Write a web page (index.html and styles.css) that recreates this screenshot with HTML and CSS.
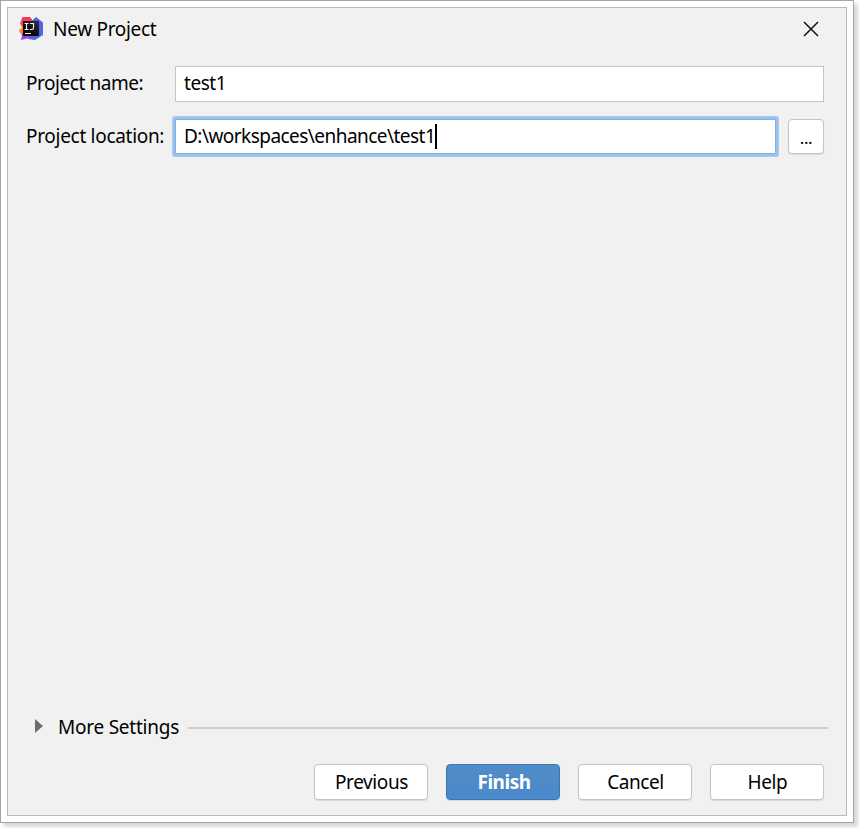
FILE: index.html
```html
<!DOCTYPE html>
<html lang="en">
<head>
<meta charset="utf-8">
<title>New Project</title>
<link rel="stylesheet" href="styles.css">
</head>
<body>
<div class="frame">
  <main class="dialog">
    <header class="titlebar">
      <svg class="logo" viewBox="0 0 24 24" aria-hidden="true">
        <defs>
          <linearGradient id="warm" x1="0" y1="0" x2="0" y2="1"><stop offset="0" stop-color="#fb2f60"/><stop offset=".55" stop-color="#f45a4a"/><stop offset="1" stop-color="#9b45e0"/></linearGradient>
          <linearGradient id="cool" x1="0" y1="0" x2="1" y2="1"><stop offset="0" stop-color="#286be8"/><stop offset=".55" stop-color="#625be5"/><stop offset="1" stop-color="#2d75e8"/></linearGradient>
          <linearGradient id="tile" x1="1" y1="0" x2="0" y2="1"><stop offset="0" stop-color="#34343a"/><stop offset=".6" stop-color="#08080b"/></linearGradient>
        </defs>
        <path d="M13 4l4-4 7 5.500V18l-8 5-7-1z" fill="url(#cool)"/>
        <path d="M3.500 0H11l4 5-6 13-7 0 2-5-3-7z" fill="url(#warm)"/>
        <path d="M0 13l4-3v7l-3-1z" fill="#ff8a1e"/>
        <path d="M2 23l1.500-7L14 19l-4 2z" fill="#9548df"/>
        <path d="M4 4h16v15H4z" fill="url(#tile)"/>
        <path d="M5.500 6.500h4M7.500 6.500V12M5.500 12.500h4M11 6.500h3.500v4.500q0 1.500-1.500 1.500H10.800M6 16.500h6" fill="none" stroke="#f4f4f4" stroke-width="1.200"/>
      </svg>
      <h1 class="title">New Project</h1>
      <svg class="close" viewBox="0 0 16 16" aria-hidden="true"><path d="M1 1l14 14M15 1L1 15" fill="none" stroke="#111" stroke-width="1.500"/></svg>
    </header>
    <section class="form">
      <label class="label name">Project name:</label>
      <div class="field"><span>test1</span></div>
      <label class="label location">Project location:</label>
      <div class="row">
        <div class="field focused"><span class="path">D:\workspaces\enhance\test1</span><i class="caret"></i></div>
        <div class="button browse"><span>...</span></div>
      </div>
    </section>
    <section class="more">
      <svg class="arrow" viewBox="0 0 8 14" aria-hidden="true"><path d="M0 0l8 7-8 7z" fill="#6e6e6e"/></svg>
      <span class="more-text">More Settings</span>
      <div class="rule"></div>
    </section>
    <footer class="actions">
      <div class="button">Previous</div>
      <div class="button primary">Finish</div>
      <div class="button">Cancel</div>
      <div class="button">Help</div>
    </footer>
  </main>
</div>
</body>
</html>
```
FILE: styles.css
```css
* { box-sizing: border-box; }
body { margin: 0; height: 828px; overflow: hidden; background: #fff; font: 19px/24px "Noto Sans", sans-serif; color: #000; white-space: nowrap; }
.frame { width: 854px; height: 823px; padding: 6px; border: 1px solid #a5a5a5; background: #fff; box-shadow: 4px 4px 4px rgba(0,0,0,.16); }
.dialog { width: 840px; height: 809px; border: 1px solid #bababa; background: #f1f1f1; display: flex; flex-direction: column; }
.titlebar { height: 42px; display: flex; align-items: center; padding: 0 27px 0 11px; }
.logo { width: 24px; height: 24px; }
.title { margin: 0 auto 0 10px; font-size: 19px; font-weight: 400; letter-spacing: -.3px; }
.close { width: 16px; height: 16px; }
.form { display: grid; grid-template-columns: 148px 650px; row-gap: 17px; padding: 16px 0 0 18px; }
.label { height: 36px; line-height: 35px; letter-spacing: -.45px; }
.location { letter-spacing: -.3px; }
.row { display: flex; gap: 12px; }
.field { height: 36px; flex: 1; display: flex; align-items: center; margin-left: 1px; padding: 0 9px 2px 8px; border: 1px solid #c4c4c4; background: #fff; letter-spacing: -.45px; }
.focused { height: 35px; padding-bottom: 1px; border-color: #87afda; box-shadow: 0 0 0 2px #97c3f3, 0 0 0 3px #a5caf3; border-radius: 1px; }
.path { letter-spacing: -.54px; }
.caret { width: 2px; height: 25px; background: #000; }
.button { width: 114px; height: 36px; padding-left: 1px; border: 1px solid #c4c4c4; border-radius: 4px; background: #fff; box-shadow: 0 1px 1px rgba(0,0,0,.1); display: flex; align-items: center; justify-content: center; letter-spacing: -.4px; }
.browse { width: 36px; padding: 2px 0 0; font-size: 17px; }
.form .button { height: 35px; }
.more { margin-top: auto; height: 24px; display: flex; align-items: center; padding: 0 18px 0 27px; }
.arrow { width: 8px; height: 14px; margin-top: -4px; }
.more-text { margin: -2px 0 0 15px; width: 130px; letter-spacing: -.24px; }
.rule { flex: 1; height: 2px; background: #cfcfcf; }
.actions { margin: 24px 22px 15px; display: flex; justify-content: flex-end; gap: 18px; }
.primary { border-color: #3d75b2; background: linear-gradient(#528cc7, #4989cc); color: #fff; font-weight: 700; padding-left: 2px; letter-spacing: -.5px; }
```
